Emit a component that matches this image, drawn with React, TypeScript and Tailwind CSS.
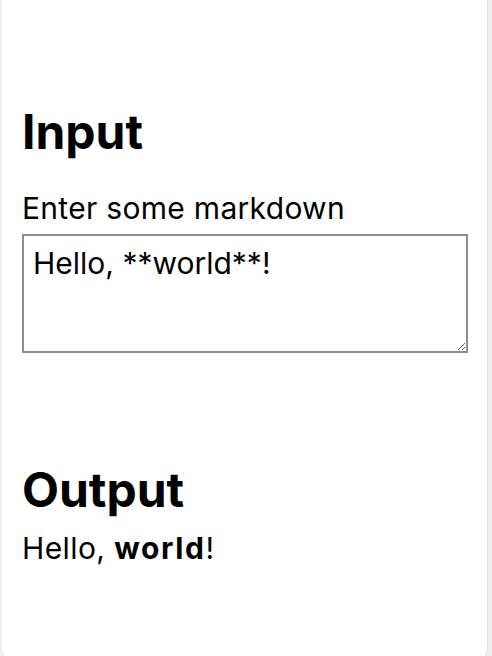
export default function App() {
  return (
    <div className="h-[656px] overflow-hidden bg-[#efefef] pl-[2px] pr-[4px]">
      <div
        className="h-[662px] rounded-b-[14px] border-r border-[#e2e2e2] bg-white pl-[20px] pr-[19px] text-black"
        style={{ fontFamily: 'Inter, "Liberation Sans", sans-serif' }}
      >
        <h1 className="pt-[108px] text-[48px] font-bold leading-none">Input</h1>
        <label className="mt-[37px] block text-[30px] leading-none tracking-[0.3px]">
          Enter some markdown
        </label>
        <textarea
          className="mt-[11px] block h-[119px] w-full border-2 border-[#8d8d8d] bg-white pl-[9px] pt-[12px] text-[30px] leading-none text-black outline-none"
          defaultValue="Hello, **world**!"
        />
        <h1 className="mt-[113px] text-[48px] font-bold leading-none">Output</h1>
        <p className="mt-[19px] text-[30px] leading-none tracking-[0.4px]">
          Hello, <strong className="font-bold tracking-[1.6px]">world</strong>!
        </p>
      </div>
    </div>
  );
}
